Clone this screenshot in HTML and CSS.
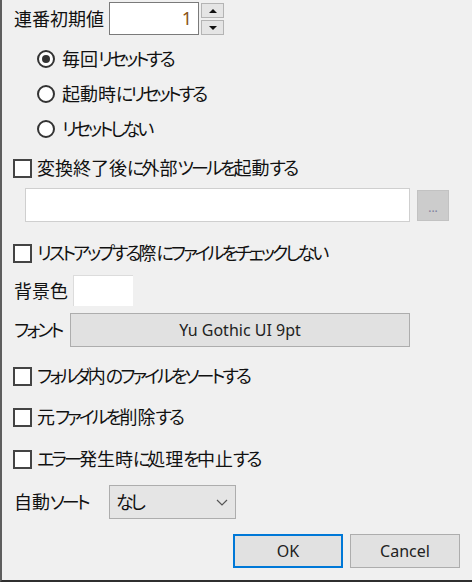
FILE: index.html
```html
<!DOCTYPE html>
<html lang="ja">
<head>
<meta charset="utf-8">
<title>設定</title>
<link rel="stylesheet" href="styles.css">
</head>
<body>
<div class="dialog">
  <div class="row row-spin">
    <span class="label label-spin">連番初期値</span>
    <div class="num-input">1</div>
    <div class="spinner">
      <div class="spin-btn"><span class="tri-up"></span></div>
      <div class="spin-btn"><span class="tri-down"></span></div>
    </div>
  </div>

  <div class="radio-group">
    <div class="row radio-row"><span class="radio checked"></span><span class="text">毎回<span class="kana">リセットする</span></span></div>
    <div class="row radio-row"><span class="radio"></span><span class="text">起動時<span class="kana">にリセットする</span></span></div>
    <div class="row radio-row"><span class="radio"></span><span class="text"><span class="kana">リセットしない</span></span></div>
  </div>

  <div class="row check-row check-tool"><span class="checkbox"></span><span class="text">変換終了後<span class="kana">に</span>外部<span class="kana">ツールを</span>起動<span class="kana">する</span></span></div>

  <div class="row path-row">
    <div class="path-input"></div>
    <div class="browse-btn">...</div>
  </div>

  <div class="row check-row check-list"><span class="checkbox"></span><span class="text"><span class="kana">リストアップする</span>際<span class="kana">にファイルをチェックしない</span></span></div>

  <div class="row bg-row">
    <span class="label">背景色</span>
    <div class="color-box"></div>
  </div>

  <div class="row font-row">
    <span class="label label-font"><span class="kana">フォント</span></span>
    <div class="button font-btn">Yu Gothic UI 9pt</div>
  </div>

  <div class="row check-row check-sort"><span class="checkbox"></span><span class="text"><span class="kana">フォルダ</span>内<span class="kana">のファイルをソートする</span></span></div>
  <div class="row check-row check-del"><span class="checkbox"></span><span class="text">元<span class="kana">ファイルを</span>削除<span class="kana">する</span></span></div>
  <div class="row check-row check-err"><span class="checkbox"></span><span class="text"><span class="kana">エラー</span>発生時<span class="kana">に</span>処理<span class="kana">を</span>中止<span class="kana">する</span></span></div>

  <div class="row sort-row">
    <span class="label label-sort">自動<span class="kana">ソート</span></span>
    <div class="combo">
      <span class="combo-text kana">なし</span>
      <svg class="chevron" width="12" height="7" viewBox="0 0 12 7"><polyline points="1,1 6,6 11,1" fill="none" stroke="#555" stroke-width="1.2"/></svg>
    </div>
  </div>

  <div class="row btn-row">
    <div class="button dlg-btn default">OK</div>
    <div class="button dlg-btn">Cancel</div>
  </div>
</div>
</body>
</html>
```

FILE: styles.css
```css
* { box-sizing: border-box; }

body {
  margin: 0;
  background: #f0f0f0;
}

.dialog {
  width: 472px;
  height: 582px;
  background: #f0f0f0;
  border-left: 2px solid #5e5e5e;
  border-bottom: 2px solid #2f2f2f;
  padding-left: 12px;
  display: flex;
  flex-direction: column;
  font-family: "Noto Sans", "Noto Sans CJK JP", sans-serif;
  font-size: 18px;
  font-feature-settings: "palt";
  color: #111;
  line-height: 24px;
}

.row {
  display: flex;
  align-items: center;
  height: 34px;
}

.label { white-space: nowrap; }
.kana { letter-spacing: -2.9px; }

/* spin row */
.row-spin { margin-top: 2px; height: 33px; align-items: stretch; }
.label-spin { width: 95px; display: flex; align-items: center; }
.num-input {
  width: 90px;
  height: 33px;
  background: #fff;
  border: 1px solid #7a7a7a;
  text-align: right;
  padding-right: 6px;
  line-height: 31px;
  color: #8a5418;
}
.spinner {
  margin-left: 2px;
  display: flex;
  flex-direction: column;
  gap: 2px;
  padding-top: 1px;
}
.spin-btn {
  width: 23px;
  height: 15px;
  background: #e5e5e5;
  border: 1px solid #b4b4b4;
  display: flex;
  align-items: center;
  justify-content: center;
}
.tri-up {
  width: 0; height: 0;
  border-left: 4px solid transparent;
  border-right: 4px solid transparent;
  border-bottom: 4px solid #111;
}
.tri-down {
  width: 0; height: 0;
  border-left: 4px solid transparent;
  border-right: 4px solid transparent;
  border-top: 4px solid #111;
}

/* radios */
.radio-group { margin-top: 6px; display: flex; flex-direction: column; }
.radio-row { height: 35px; padding-left: 23px; }
.radio {
  width: 18px;
  height: 18px;
  border: 2px solid #333;
  border-radius: 50%;
  background: #fff;
  margin-right: 7px;
  display: flex;
  align-items: center;
  justify-content: center;
  flex: none;
}
.radio.checked::after {
  content: "";
  width: 8px;
  height: 8px;
  border-radius: 50%;
  background: #333;
}

/* checkboxes */
.checkbox {
  width: 19px;
  height: 19px;
  border: 2px solid #444;
  background: #fff;
  margin-left: -1px;
  margin-right: 5px;
  flex: none;
}
.check-tool { margin-top: 5px; }
.check-list { margin-top: 14px; }
.check-sort { margin-top: 12px; }
.check-del { margin-top: 7px; }
.check-err { margin-top: 8px; }

.text { white-space: nowrap; }

/* path row */
.path-row { margin-top: 3px; padding-left: 11px; }
.path-input {
  width: 385px;
  height: 34px;
  background: #fff;
  border: 1px solid #cfcfcf;
}
.browse-btn {
  margin-left: 7px;
  width: 32px;
  height: 31px;
  background: #cccccc;
  border: 1px solid #c2c2c2;
  color: #7f7f9c;
  font-size: 12px;
  line-height: 12px;
  text-align: center;
  padding-top: 11px;
}

/* background colour */
.bg-row { margin-top: 5px; height: 31px; }
.bg-row .label { width: 59px; }
.color-box {
  width: 60px;
  height: 31px;
  background: #fff;
  border-top: 1px solid #dcdcdc;
  border-left: 1px solid #dcdcdc;
}

/* font */
.font-row { margin-top: 7px; }
.label-font { width: 56px; }
.button {
  background: #e1e1e1;
  border: 1px solid #adadad;
  display: flex;
  align-items: center;
  justify-content: center;
  font-size: 16px;
  color: #222;
}
.font-btn { width: 340px; height: 34px; }

/* sort */
.sort-row { margin-top: 9px; }
.label-sort { width: 95px; }
.combo {
  width: 127px;
  height: 34px;
  background: #e5e5e5;
  border: 1px solid #adadad;
  display: flex;
  align-items: center;
  padding-left: 6px;
  padding-right: 7px;
}
.combo-text { flex: 1; }
.chevron { display: block; }

/* dialog buttons */
.btn-row {
  margin-top: 15px;
  justify-content: flex-end;
  gap: 7px;
  padding-right: 12px;
}
.dlg-btn { width: 110px; height: 34px; }
.dlg-btn.default { border: 2px solid #0078d7; }
```
